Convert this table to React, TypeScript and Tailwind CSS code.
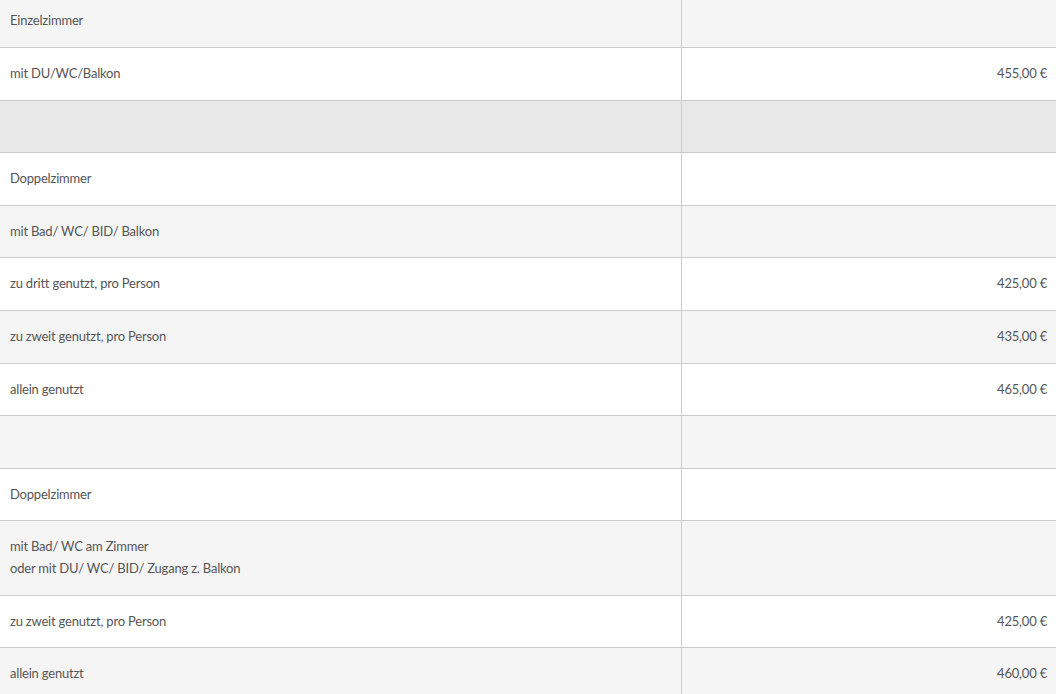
import React from "react";

type Row = { label: string[]; price?: string; bg: string };

const rows: Row[] = [
  { label: ["Einzelzimmer"], bg: "bg-[#f5f5f5]" },
  { label: ["mit DU/WC/Balkon"], price: "455,00 €", bg: "bg-white" },
  { label: [""], bg: "bg-[#e8e8e8]" },
  { label: ["Doppelzimmer"], bg: "bg-white" },
  { label: ["mit Bad/ WC/ BID/ Balkon"], bg: "bg-[#f5f5f5]" },
  { label: ["zu dritt genutzt, pro Person"], price: "425,00 €", bg: "bg-white" },
  { label: ["zu zweit genutzt, pro Person"], price: "435,00 €", bg: "bg-[#f5f5f5]" },
  { label: ["allein genutzt"], price: "465,00 €", bg: "bg-white" },
  { label: [""], bg: "bg-[#f5f5f5]" },
  { label: ["Doppelzimmer"], bg: "bg-white" },
  { label: ["mit Bad/ WC am Zimmer", "oder mit DU/ WC/ BID/ Zugang z. Balkon"], bg: "bg-[#f5f5f5]" },
  { label: ["zu zweit genutzt, pro Person"], price: "425,00 €", bg: "bg-white" },
  { label: ["allein genutzt"], price: "460,00 €", bg: "bg-[#f5f5f5]" },
];

export default function App() {
  return (
    <div className="w-[1056px] h-[694px] overflow-hidden bg-white">
      <table
        className="w-full border-collapse mt-[-4.6px] text-[13px] leading-[21.6px] tracking-[-0.2px] text-[#555555]"
        style={{ fontFamily: "Lato, 'Noto Sans', sans-serif" }}
      >
        <colgroup>
          <col className="w-[681.5px]" />
          <col />
        </colgroup>
        <tbody>
          {rows.map((r, i) => (
            <tr key={i} className={`${r.bg} border-b border-[#cccccc]`}>
              <td className="pl-[10px] pr-2 py-[15px] border-r border-[#cccccc] align-middle">
                {r.label.map((l, j) => (
                  <div key={j} className="h-[21.6px]">{l}</div>
                ))}
              </td>
              <td className="pr-[9px] pl-2 py-[15px] text-right align-middle">
                {r.price ?? ""}
              </td>
            </tr>
          ))}
        </tbody>
      </table>
    </div>
  );
}
